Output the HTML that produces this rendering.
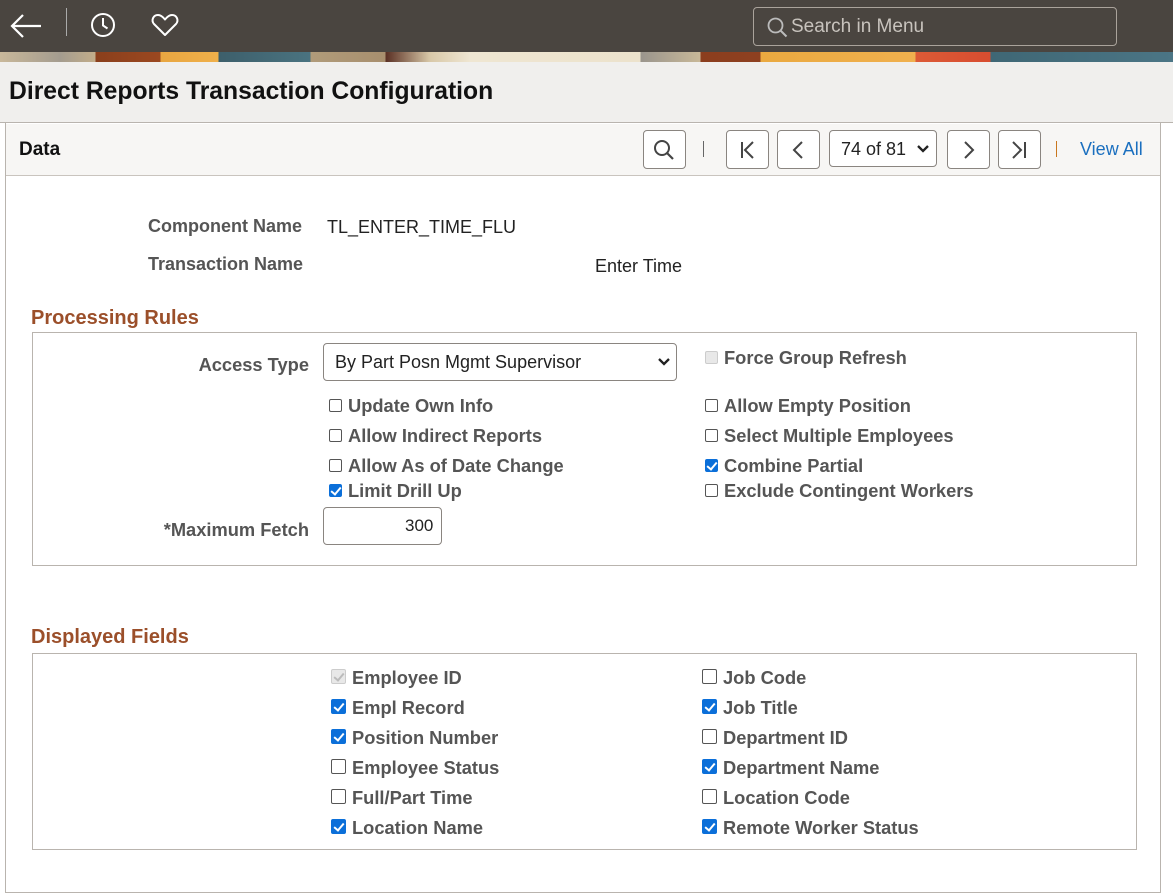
<!DOCTYPE html>
<html><head><meta charset="utf-8"><style>
*{box-sizing:border-box;margin:0;padding:0}
body{width:1173px;height:894px;background:#fff;font-family:"Liberation Sans",Arial,sans-serif;position:relative;overflow:hidden;color:#333}
.a{position:absolute;white-space:nowrap}
.top{left:0;top:0;width:1173px;height:52px;background:#4a4540}
.ban{left:0;top:52px;width:1173px;height:10px;background:linear-gradient(90deg,#c9b89a 0,#a49c8f 60px,#c2ad8a 95px,#8a3f1c 96px,#9b4820 160px,#e8a641 161px,#f0b04a 218px,#3d5f6b 219px,#4a7380 310px,#b09b7a 311px,#a88f6e 385px,#5a3024 386px,#d8c8a8 430px,#efe6d2 470px,#ece2cc 640px,#9a958d 641px,#c8b898 700px,#8b3e1e 701px,#8e4020 760px,#eaa940 761px,#f0b04e 915px,#dc5a36 916px,#d84d30 990px,#3f6775 991px,#4b7585 1173px)}
.tbar{left:0;top:62px;width:1173px;height:61px;background:#f0efed;border-bottom:1px solid #b9b4ae}
.lbl{font-weight:bold;color:#555;font-size:18.3px}
.r{text-align:right;width:200px}
.sec{font-weight:bold;color:#9b4f2a;font-size:20px}
.btn{top:130px;height:39px;width:43px;border:1px solid #8a8580;border-radius:4px;background:#fff}
.cb{display:inline-block;width:13px;height:13px;border:1px solid #555;border-radius:2px;background:#fff;vertical-align:0px;margin-right:6px;position:relative}
.cb.on{background:#0b6fd9;border-color:#0b6fd9}
.cb.on:after{content:"";position:absolute;left:3px;top:0px;width:4px;height:8px;border:solid #fff;border-width:0 2px 2px 0;transform:rotate(40deg)}
.cb.dis{background:#e8e8e8;border-color:#ccc}
.cb.dis.on:after{border-color:#bbb}
.cb.lg{width:15px;height:15px}
.cb.lg.on:after{left:4px;top:1px}
</style></head><body>
<div class="a top"></div>
<svg class="a" style="left:8px;top:12px" width="36" height="28" viewBox="0 0 36 28"><path d="M33 14H4M15 3L4 14l11 11" stroke="#fff" stroke-width="2.2" fill="none"/></svg>
<div class="a" style="left:66px;top:8px;width:1px;height:28px;background:#aaa"></div>
<svg class="a" style="left:89px;top:11px" width="28" height="28" viewBox="0 0 28 28"><circle cx="14" cy="14" r="11" stroke="#fff" stroke-width="2" fill="none"/><path d="M14 7v7.5l4.5 3" stroke="#fff" stroke-width="2" fill="none"/></svg>
<svg class="a" style="left:150px;top:12px" width="30" height="26" viewBox="0 0 30 26"><path d="M15 23L4 12C1 8.5 3 3 8 3c3 0 5 2 7 4.5C17 5 19 3 22 3c5 0 7 5.5 4 9z" stroke="#fff" stroke-width="2" fill="none" stroke-linejoin="round"/></svg>
<div class="a" style="left:753px;top:7px;width:364px;height:39px;border:1px solid #aaa39b;border-radius:4px"></div>
<svg class="a" style="left:766px;top:16px" width="24" height="24" viewBox="0 0 24 24"><circle cx="9.5" cy="9.5" r="7" stroke="#bbb" stroke-width="1.8" fill="none"/><path d="M14.5 14.5l6 6" stroke="#bbb" stroke-width="2"/></svg>
<div class="a" style="left:791px;top:16px;font-size:19px;color:#c8c3bd">Search in Menu</div>
<div class="a ban"></div>
<div class="a tbar"></div>
<div class="a" style="left:9px;top:78px;font-size:24.7px;font-weight:bold;color:#111">Direct Reports Transaction Configuration</div>
<div class="a" style="left:5px;top:123px;width:1156px;height:770px;border:1px solid #b9b4ae;border-top:none"></div>
<div class="a" style="left:6px;top:124px;width:1154px;height:52px;background:#f7f6f4;border-bottom:1px solid #c9c4be"></div>
<div class="a" style="left:19px;top:139px;font-size:19px;font-weight:bold;color:#111">Data</div>
<div class="a btn" style="left:643px;width:43px"></div>
<svg class="a" style="left:652px;top:138px" width="24" height="24" viewBox="0 0 24 24"><circle cx="10" cy="10" r="7" stroke="#444" stroke-width="2" fill="none"/><path d="M15 15l6 6" stroke="#444" stroke-width="2.2"/></svg>
<div class="a" style="left:703px;top:141px;width:1px;height:16px;background:#666"></div>
<div class="a btn" style="left:726px"></div>
<svg class="a" style="left:736px;top:138px" width="24" height="24" viewBox="0 0 24 24"><path d="M6 4v16M17 4l-8 8 8 8" stroke="#444" stroke-width="2" fill="none"/></svg>
<div class="a btn" style="left:777px"></div>
<svg class="a" style="left:787px;top:138px" width="24" height="24" viewBox="0 0 24 24"><path d="M15 4l-8 8 8 8" stroke="#444" stroke-width="2" fill="none"/></svg>
<div class="a btn" style="left:829px;width:108px;height:37px;top:130px"></div>
<div class="a" style="left:841px;top:139px;font-size:18px;color:#222">74 of 81</div>
<svg class="a" style="left:916px;top:143px" width="14" height="12" viewBox="0 0 14 12"><path d="M2 3l5 5 5-5" stroke="#222" stroke-width="2.3" fill="none"/></svg>
<div class="a btn" style="left:947px"></div>
<svg class="a" style="left:956px;top:138px" width="24" height="24" viewBox="0 0 24 24"><path d="M9 4l8 8-8 8" stroke="#444" stroke-width="2" fill="none"/></svg>
<div class="a btn" style="left:998px"></div>
<svg class="a" style="left:1007px;top:138px" width="24" height="24" viewBox="0 0 24 24"><path d="M6 4l8 8-8 8M18 4v16" stroke="#444" stroke-width="2" fill="none"/></svg>
<div class="a" style="left:1056px;top:141px;width:1px;height:16px;background:#c9771f"></div>
<div class="a" style="left:1080px;top:139px;font-size:18px;color:#1a6fbf">View All</div>

<div class="a lbl" style="left:148px;top:216px;font-size:18px">Component Name</div>
<div class="a" style="left:327px;top:217px;font-size:18px;color:#222">TL_ENTER_TIME_FLU</div>
<div class="a lbl" style="left:148px;top:254px;font-size:18px">Transaction Name</div>
<div class="a" style="left:595px;top:256px;font-size:18px;color:#222">Enter Time</div>

<div class="a sec" style="left:31px;top:307px">Processing Rules</div>
<div class="a" style="left:32px;top:332px;width:1105px;height:234px;border:1px solid #b9b4ae"></div>
<div class="a lbl r" style="left:109px;top:354px">Access Type</div>
<div class="a" style="left:323px;top:343px;width:354px;height:38px;border:1px solid #8a8580;border-radius:4px"></div>
<div class="a" style="left:335px;top:352px;font-size:18px;color:#222">By Part Posn Mgmt Supervisor</div>
<svg class="a" style="left:657px;top:356px" width="14" height="12" viewBox="0 0 14 12"><path d="M2 3l5 5 5-5" stroke="#222" stroke-width="2.3" fill="none"/></svg>
<div class="a lbl" style="left:329px;top:395px"><span class="cb"></span>Update Own Info</div>
<div class="a lbl" style="left:329px;top:425px"><span class="cb"></span>Allow Indirect Reports</div>
<div class="a lbl" style="left:329px;top:455px"><span class="cb"></span>Allow As of Date Change</div>
<div class="a lbl" style="left:329px;top:480px"><span class="cb on"></span>Limit Drill Up</div>
<div class="a lbl r" style="left:109px;top:519px">*Maximum Fetch</div>
<div class="a" style="left:323px;top:507px;width:119px;height:38px;border:1px solid #8a8580;border-radius:4px"></div>
<div class="a" style="left:405px;top:516px;font-size:17px;color:#222">300</div>
<div class="a lbl" style="left:705px;top:347px"><span class="cb dis"></span>Force Group Refresh</div>
<div class="a lbl" style="left:705px;top:395px"><span class="cb"></span>Allow Empty Position</div>
<div class="a lbl" style="left:705px;top:425px"><span class="cb"></span>Select Multiple Employees</div>
<div class="a lbl" style="left:705px;top:455px"><span class="cb on"></span>Combine Partial</div>
<div class="a lbl" style="left:705px;top:480px"><span class="cb"></span>Exclude Contingent Workers</div>

<div class="a sec" style="left:31px;top:626px">Displayed Fields</div>
<div class="a" style="left:32px;top:653px;width:1105px;height:197px;border:1px solid #b9b4ae"></div>
<div class="a lbl" style="left:331px;top:667px"><span class="cb lg dis on"></span>Employee ID</div>
<div class="a lbl" style="left:331px;top:697px"><span class="cb lg on"></span>Empl Record</div>
<div class="a lbl" style="left:331px;top:727px"><span class="cb lg on"></span>Position Number</div>
<div class="a lbl" style="left:331px;top:757px"><span class="cb lg"></span>Employee Status</div>
<div class="a lbl" style="left:331px;top:787px"><span class="cb lg"></span>Full/Part Time</div>
<div class="a lbl" style="left:331px;top:817px"><span class="cb lg on"></span>Location Name</div>
<div class="a lbl" style="left:702px;top:667px"><span class="cb lg"></span>Job Code</div>
<div class="a lbl" style="left:702px;top:697px"><span class="cb lg on"></span>Job Title</div>
<div class="a lbl" style="left:702px;top:727px"><span class="cb lg"></span>Department ID</div>
<div class="a lbl" style="left:702px;top:757px"><span class="cb lg on"></span>Department Name</div>
<div class="a lbl" style="left:702px;top:787px"><span class="cb lg"></span>Location Code</div>
<div class="a lbl" style="left:702px;top:817px"><span class="cb lg on"></span>Remote Worker Status</div>
</body></html>
